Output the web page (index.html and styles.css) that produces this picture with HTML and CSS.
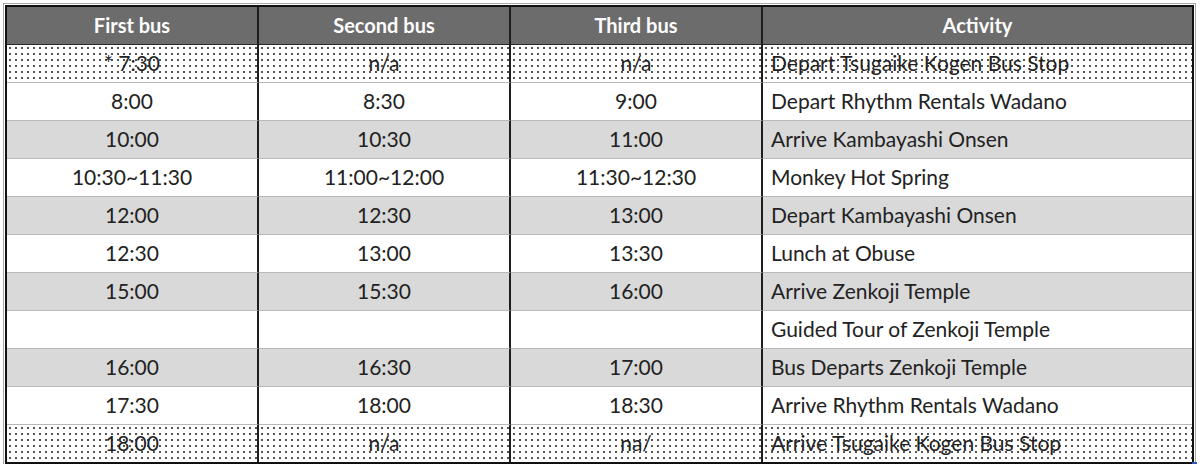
FILE: index.html
```html
<!DOCTYPE html>
<html>
<head>
<meta charset="utf-8">
<link rel="stylesheet" href="styles.css">
</head>
<body>
<div class="frame">
<table class="sched">
  <colgroup>
    <col class="c-bus"><col class="c-bus"><col class="c-bus"><col class="c-act">
  </colgroup>
  <thead>
    <tr><th>First bus</th><th>Second bus</th><th>Third bus</th><th class="last">Activity</th></tr>
  </thead>
  <tbody>
    <tr class="dots"><td>* 7:30</td><td>n/a</td><td>n/a</td><td class="act">Depart Tsugaike Kogen Bus Stop</td></tr>
    <tr><td>8:00</td><td>8:30</td><td>9:00</td><td class="act">Depart Rhythm Rentals Wadano</td></tr>
    <tr class="grey"><td>10:00</td><td>10:30</td><td>11:00</td><td class="act">Arrive Kambayashi Onsen</td></tr>
    <tr><td>10:30~11:30</td><td>11:00~12:00</td><td>11:30~12:30</td><td class="act">Monkey Hot Spring</td></tr>
    <tr class="grey"><td>12:00</td><td>12:30</td><td>13:00</td><td class="act">Depart Kambayashi Onsen</td></tr>
    <tr><td>12:30</td><td>13:00</td><td>13:30</td><td class="act">Lunch at Obuse</td></tr>
    <tr class="grey"><td>15:00</td><td>15:30</td><td>16:00</td><td class="act">Arrive Zenkoji Temple</td></tr>
    <tr><td></td><td></td><td></td><td class="act">Guided Tour of Zenkoji Temple</td></tr>
    <tr class="grey"><td>16:00</td><td>16:30</td><td>17:00</td><td class="act">Bus Departs Zenkoji Temple</td></tr>
    <tr><td>17:30</td><td>18:00</td><td>18:30</td><td class="act">Arrive Rhythm Rentals Wadano</td></tr>
    <tr class="dots lastrow"><td>18:00</td><td>n/a</td><td>na/</td><td class="act">Arrive Tsugaike Kogen Bus Stop</td></tr>
  </tbody>
</table>
<span class="handle"></span>
</div>
</body>
</html>
```
FILE: styles.css
```css
html, body {
  margin: 0;
  padding: 0;
  background: #ffffff;
}
body {
  padding: 5px 0 0 5px;
  font-family: Lato, "Open Sans", sans-serif;
}
.frame {
  position: relative;
  width: 1189px;
}
.sched {
  border-collapse: separate;
  border-spacing: 0;
  table-layout: fixed;
  width: 1189px;
  border: 2px solid #111;
  outline: 1px solid #a8a8a8;
  outline-offset: 1px;
  font-size: 21px;
  color: #222;
}
.c-bus { width: 252px; }
.sched th, .sched td {
  height: 38px;
  box-sizing: border-box;
  padding: 0 0 3px 0;
  text-align: center;
  vertical-align: middle;
  border-right: 2px solid #1e1e1e;
  border-bottom: 1px solid #b9b9b9;
  white-space: nowrap;
  overflow: hidden;
}
.sched th:last-child, .sched td:last-child {
  border-right: 0;
}
.sched th {
  background: #6c6c6c;
  color: #fdfdfd;
  font-weight: 700;
  font-size: 20px;
  padding-bottom: 2px;
  border-bottom: 1px solid #2a2a2a;
}
.sched td.act {
  text-align: left;
  padding-left: 8px;
}
.grey td {
  background: #d9d9d9;
}
.dots td {
  background-color: #ffffff;
  background-image: radial-gradient(circle at 3px 3px, #555555 0, #555555 0.9px, rgba(255,255,255,0) 1.1px);
  background-size: 6px 6px;
  background-repeat: repeat;
  background-position: 0 0;
}
.lastrow td {
  border-bottom: 0;
  height: 37px;
}
.handle {
  position: absolute;
  right: -3px;
  bottom: -3px;
  width: 5px;
  height: 5px;
  background: #2f56b8;
}
```
